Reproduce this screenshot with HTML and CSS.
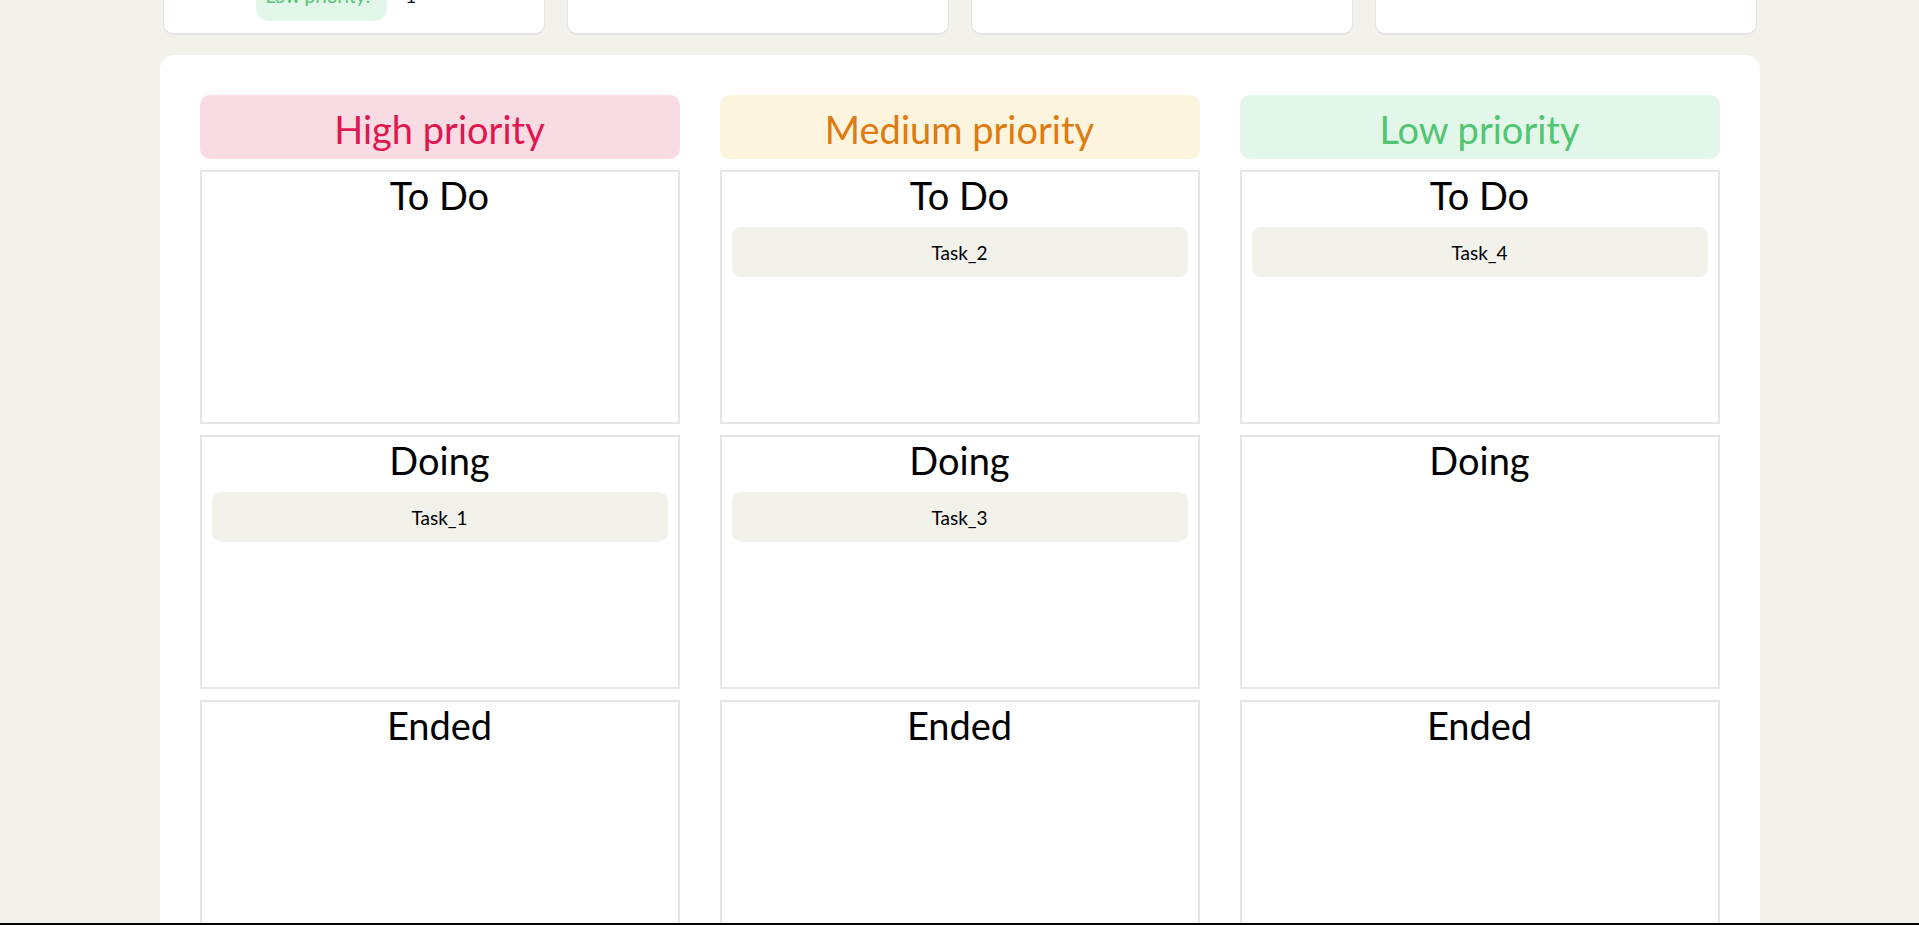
FILE: index.html
```html
<!DOCTYPE html>
<html lang="en">
<head>
<meta charset="utf-8">
<title>Task board</title>
<link rel="stylesheet" href="styles.css">
</head>
<body>
  <div class="stats">
    <div class="stat-card">
      <div class="stat-row"><span class="badge badge-low">Low priority:</span><span class="count">1</span></div>
    </div>
    <div class="stat-card"></div>
    <div class="stat-card"></div>
    <div class="stat-card"></div>
  </div>

  <main class="board">
    <section class="column">
      <h2 class="priority priority-high">High priority</h2>
      <div class="lane"><h3 class="lane-title">To Do</h3></div>
      <div class="lane"><h3 class="lane-title">Doing</h3><div class="task">Task_1</div></div>
      <div class="lane"><h3 class="lane-title">Ended</h3></div>
    </section>
    <section class="column">
      <h2 class="priority priority-medium">Medium priority</h2>
      <div class="lane"><h3 class="lane-title">To Do</h3><div class="task">Task_2</div></div>
      <div class="lane"><h3 class="lane-title">Doing</h3><div class="task">Task_3</div></div>
      <div class="lane"><h3 class="lane-title">Ended</h3></div>
    </section>
    <section class="column">
      <h2 class="priority priority-low">Low priority</h2>
      <div class="lane"><h3 class="lane-title">To Do</h3><div class="task">Task_4</div></div>
      <div class="lane"><h3 class="lane-title">Doing</h3></div>
      <div class="lane"><h3 class="lane-title">Ended</h3></div>
    </section>
  </main>
  <div class="frame-edge"></div>
</body>
</html>
```

FILE: styles.css
```css
* { box-sizing: border-box; }

html, body {
  margin: 0;
  padding: 0;
}

body {
  background: #f2f1ea;
  font-family: Lato, "Open Sans", "Noto Sans", sans-serif;
  color: #000;
  overflow: hidden;
  height: 925px;
}

.stats {
  width: 1600px;
  margin: -136px auto 0;
  padding: 0 3px;
  display: flex;
  gap: 22px;
}

.stat-card {
  flex: 1;
  height: 170px;
  background: #fff;
  border: 1px solid #e4e4e9;
  border-radius: 10px;
  box-shadow: 0 1px 0 #e4e4e9;
  display: flex;
  flex-direction: column;
  justify-content: flex-end;
  padding: 0 0 12px 92px;
}

.stat-row {
  display: flex;
  align-items: flex-end;
  gap: 18px;
}

.badge {
  display: inline-block;
  font-size: 19px;
  line-height: 22px;
  padding: 0 17px 14px 10px;
  border-radius: 0 0 13px 13px;
}

.badge-low { background: #e3f6ea; color: #52c571; }

.count {
  font-size: 19px;
  line-height: 22px;
  padding-bottom: 14px;
  color: #0c1330;
}

.board {
  width: 1600px;
  margin: 21px auto 0;
  background: #fff;
  border-radius: 14px;
  padding: 40px;
  display: grid;
  grid-template-columns: repeat(3, 1fr);
  column-gap: 40px;
}

.column {
  display: flex;
  flex-direction: column;
  gap: 11px;
}

.priority {
  margin: 0;
  height: 64px;
  padding-top: 5px;
  border-radius: 10px;
  font-weight: 400;
  font-size: 38px;
  line-height: 59px;
  text-align: center;
}

.priority-high { background: #f9dbe4; color: #e0164e; }
.priority-medium { background: #fdf4de; color: #df7a10; }
.priority-low { background: #e3f6ea; color: #52c571; }

.lane {
  height: 254px;
  border: 2px solid #e4e4e9;
  padding: 0 10px;
  display: flex;
  flex-direction: column;
}

.lane-title {
  margin: 0 0 9px;
  font-weight: 400;
  font-size: 38px;
  line-height: 46px;
  text-align: center;
}

.task {
  height: 50px;
  background: #f2f1ea;
  border-radius: 9px;
  display: flex;
  align-items: center;
  justify-content: center;
  font-size: 19px;
}

.frame-edge {
  position: fixed;
  left: 0;
  right: 0;
  bottom: 0;
  height: 2px;
  background: #000;
}
```
